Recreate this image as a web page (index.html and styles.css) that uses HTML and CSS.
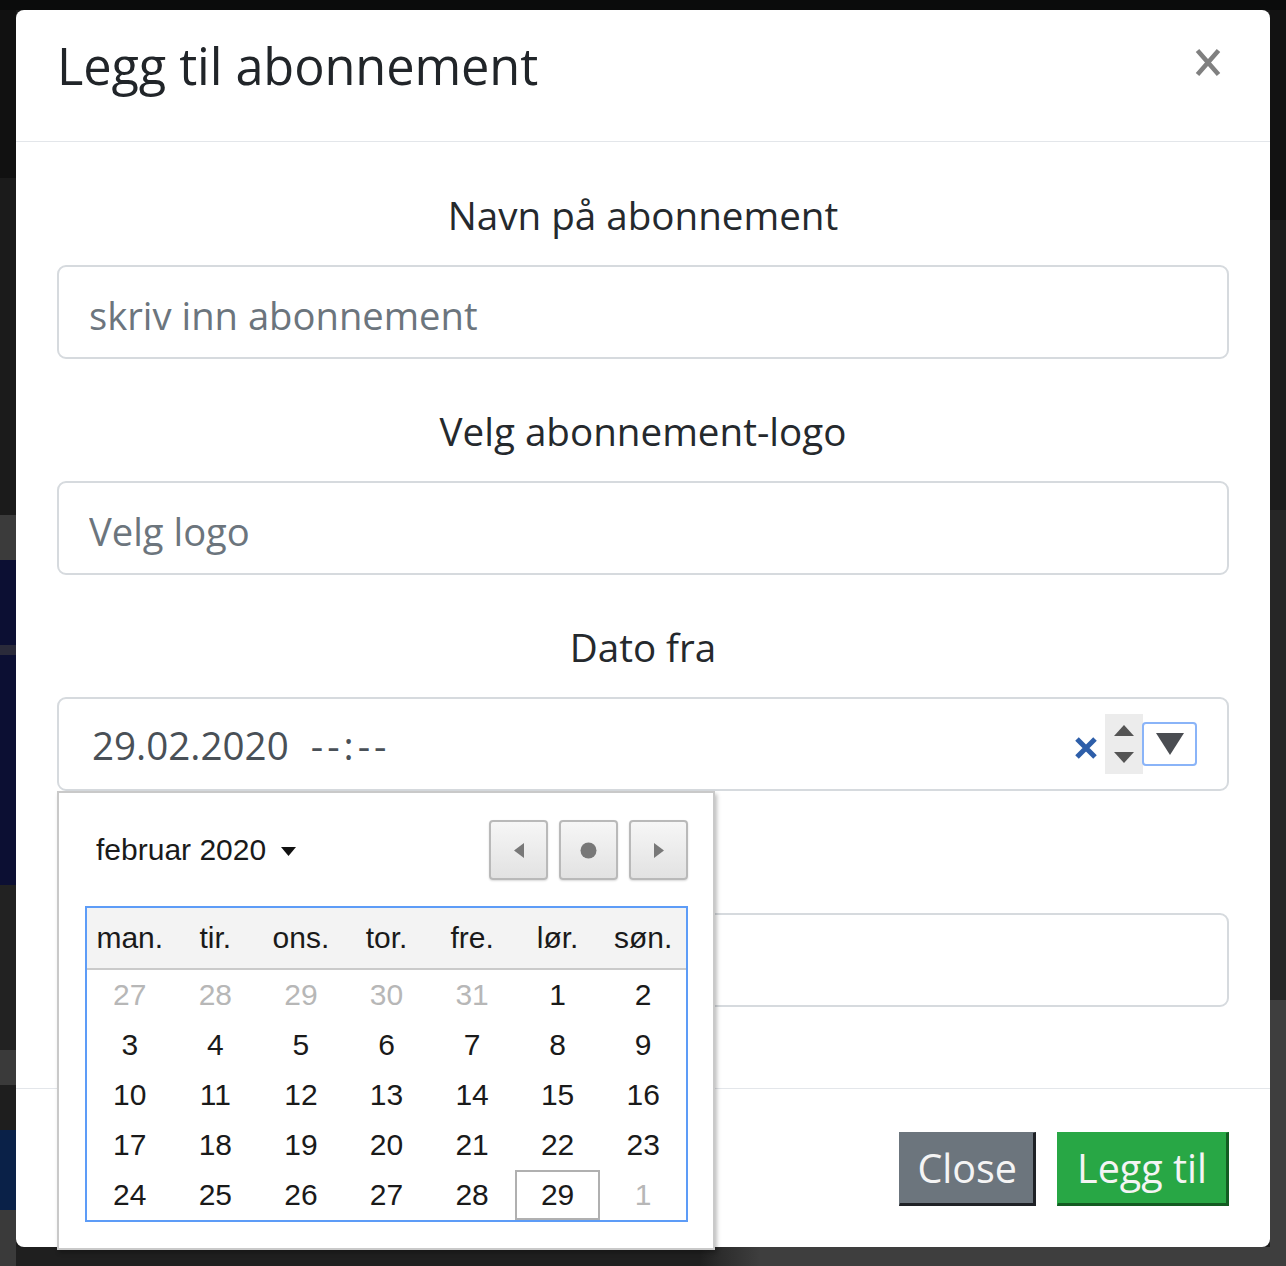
FILE: index.html
```html
<!DOCTYPE html>
<html lang="no">
<head>
<meta charset="utf-8">
<title>Legg til abonnement</title>
<link rel="stylesheet" href="styles.css">
</head>
<body>
<div class="modal">
  <div class="modal-header">
    <h5 class="modal-title">Legg til abonnement</h5>
    <button class="close" type="button" aria-label="Close">
      <svg width="26" height="31" viewBox="0 0 26 31"><path d="M2.5 3.5 L23.5 27.5 M23.5 3.5 L2.5 27.5" stroke="#808080" stroke-width="4.6" fill="none"/></svg>
    </button>
  </div>
  <div class="modal-body">
    <div class="form-group">
      <label class="label">Navn på abonnement</label>
      <input class="form-control" type="text" placeholder="skriv inn abonnement">
    </div>
    <div class="form-group">
      <label class="label">Velg abonnement-logo</label>
      <input class="form-control" type="text" placeholder="Velg logo">
    </div>
    <div class="form-group">
      <label class="label">Dato fra</label>
      <div class="date-wrap">
        <div class="form-control date-input">
          <span class="date-value">29.02.2020</span><span class="time-value">--:--</span>
          <span class="date-controls">
            <svg class="clear" width="26" height="26" viewBox="0 0 26 26"><path d="M4 4 L22 22 M22 4 L4 22" stroke="#2d5ea9" stroke-width="5" fill="none"/></svg>
            <span class="spin">
              <svg width="20" height="11" viewBox="0 0 20 11"><path d="M10 0 L20 11 L0 11 Z" fill="#545454"/></svg>
              <svg width="20" height="11" viewBox="0 0 20 11"><path d="M0 0 L20 0 L10 11 Z" fill="#545454"/></svg>
            </span>
            <span class="drop">
              <svg width="28" height="22" viewBox="0 0 28 22"><path d="M0 0 L28 0 L14 22 Z" fill="#4a4d52"/></svg>
            </span>
          </span>
        </div>
        <div class="picker">
          <div class="picker-head">
            <span class="month">februar 2020
              <svg class="caret" width="15" height="9" viewBox="0 0 15 9"><path d="M0 0 L15 0 L7.5 9 Z" fill="#111"/></svg>
            </span>
            <span class="nav">
              <span class="nav-btn"><svg width="10" height="15" viewBox="0 0 10 15"><path d="M10 0 L10 15 L0 7.5 Z" fill="#787878"/></svg></span>
              <span class="nav-btn"><svg width="17" height="17" viewBox="0 0 17 17"><circle cx="8.5" cy="8.5" r="8" fill="#787878"/></svg></span>
              <span class="nav-btn"><svg width="10" height="15" viewBox="0 0 10 15"><path d="M0 0 L10 7.5 L0 15 Z" fill="#787878"/></svg></span>
            </span>
          </div>
          <div class="cal">
            <div class="cal-head">
              <span>man.</span><span>tir.</span><span>ons.</span><span>tor.</span><span>fre.</span><span>lør.</span><span>søn.</span>
            </div>
            <div class="cal-body">
              <span class="muted">27</span><span class="muted">28</span><span class="muted">29</span><span class="muted">30</span><span class="muted">31</span><span>1</span><span>2</span>
              <span>3</span><span>4</span><span>5</span><span>6</span><span>7</span><span>8</span><span>9</span>
              <span>10</span><span>11</span><span>12</span><span>13</span><span>14</span><span>15</span><span>16</span>
              <span>17</span><span>18</span><span>19</span><span>20</span><span>21</span><span>22</span><span>23</span>
              <span>24</span><span>25</span><span>26</span><span>27</span><span>28</span><span class="selected">29</span><span class="muted">1</span>
            </div>
          </div>
        </div>
      </div>
    </div>
    <div class="form-group">
      <label class="label">Dato til</label>
      <input class="form-control" type="text">
    </div>
  </div>
  <div class="modal-footer">
    <button class="btn btn-secondary" type="button">Close</button>
    <button class="btn btn-success" type="button">Legg til</button>
  </div>
</div>
</body>
</html>
```

FILE: styles.css
```css
html, body {
  margin: 0;
  padding: 0;
  height: 1266px;
  overflow: hidden;
}

body {
  padding: 10px 16px 0 16px;
  box-sizing: border-box;
  font-family: "Open Sans", "Noto Sans", sans-serif;
  background:
    linear-gradient(#0b0c0c, #0b0c0c) left top / 100% 10px no-repeat,
    linear-gradient(to bottom, #111 0 178px, #1b1b1b 178px 515px, #3b3b3b 515px 560px, #0c0f33 560px 645px, #2a2a3a 645px 655px, #0c0f33 655px 885px, #222 885px 1050px, #3a3a3a 1050px 1085px, #1e1e1e 1085px 1130px, #0a2148 1130px 1210px, #3a3a3a 1210px) left top / 16px 100% no-repeat,
    linear-gradient(to bottom, #121212 0 220px, #1c1c1c 220px 510px, #262626 510px 1000px, #3e3e3e 1000px) right top / 16px 100% no-repeat,
    linear-gradient(to right, #1f1f1f 0 700px, #2c2c2c 720px, #3e3e3e 760px) left bottom / 100% 19px no-repeat,
    #1c1c1c;
}

.modal {
  background: #fff;
  border-radius: 8px;
  width: 1254px;
}

.modal-header {
  display: flex;
  align-items: flex-start;
  padding: 19px 41px 38px 41px;
  border-bottom: 1px solid #e3e6ea;
}

.modal-title {
  margin: 0;
  font-size: 50.5px;
  line-height: 74px;
  font-weight: 400;
  color: #212529;
  letter-spacing: -0.1px;
}

.close {
  margin-left: auto;
  margin-top: 18px;
  padding: 0 8px 0 0;
  border: 0;
  background: transparent;
  line-height: 0;
}

.modal-body {
  padding: 45px 41px 37px 41px;
}

.form-group {
  margin-bottom: 44px;
}

.label {
  display: block;
  text-align: center;
  font-size: 38.6px;
  line-height: 56px;
  margin-bottom: 22px;
  color: #25292d;
}

.form-control {
  display: block;
  width: 100%;
  box-sizing: border-box;
  height: 94px;
  padding: 5px 30px 0 30px;
  border: 2px solid #d6dade;
  border-radius: 9px;
  font-family: "Open Sans", "Noto Sans", sans-serif;
  font-size: 38.2px;
  color: #495057;
  background: #fff;
  outline: none;
}

.form-control::placeholder {
  color: #6c757d;
  opacity: 1;
}

.date-wrap {
  position: relative;
}

.date-input {
  display: flex;
  align-items: center;
  padding: 0 30px 0 33px;
  font-size: 38.6px;
}

.date-value {
  color: #495057;
  margin-top: 2px;
}

.time-value {
  color: #495057;
  margin-left: 22px;
  letter-spacing: 4px;
  margin-top: 2px;
}

.date-controls {
  margin-left: auto;
  display: flex;
  align-items: center;
}

.clear {
  margin-top: 8px;
  margin-right: 6px;
}

.spin {
  width: 38px;
  height: 60px;
  background: #ececec;
  display: flex;
  flex-direction: column;
  align-items: center;
  justify-content: center;
  gap: 16px;
}

.drop {
  width: 55px;
  height: 44px;
  box-sizing: border-box;
  border: 2px solid #8ab4f8;
  border-radius: 4px;
  display: flex;
  align-items: center;
  justify-content: center;
  margin-left: -1px;
}

.picker {
  position: absolute;
  top: 100%;
  left: 0;
  width: 658px;
  height: 459px;
  box-sizing: border-box;
  background: #fff;
  border: 2px solid #c9c9c9;
  box-shadow: 2px 3px 4px rgba(0, 0, 0, 0.25);
  padding: 27px 25px 0 26px;
  font-family: "Liberation Sans", Arial, sans-serif;
  z-index: 2;
}

.picker-head {
  display: flex;
  align-items: center;
  justify-content: space-between;
  height: 60px;
}

.month {
  font-size: 30px;
  color: #1a1a1a;
  padding-left: 11px;
  display: flex;
  align-items: center;
}

.caret {
  margin-left: 15px;
  margin-top: 2px;
}

.nav {
  display: flex;
  gap: 11px;
}

.nav-btn {
  width: 59px;
  height: 60px;
  box-sizing: border-box;
  border: 2px solid #b9b9b9;
  border-radius: 4px;
  background: linear-gradient(#f6f6f6, #e2e2e2);
  box-shadow: 0 1px 2px rgba(0, 0, 0, 0.15);
  display: flex;
  align-items: center;
  justify-content: center;
}

.cal {
  margin-top: 26px;
  border: 2px solid #5d9cf7;
  width: 603px;
  box-sizing: border-box;
}

.cal-head,
.cal-body {
  display: grid;
  grid-template-columns: repeat(7, 1fr);
}

.cal-head {
  background: #f3f3f3;
  border-bottom: 2px solid #cacaca;
  height: 62px;
  box-sizing: border-box;
}

.cal-head span,
.cal-body span {
  display: flex;
  align-items: center;
  justify-content: center;
  font-size: 30px;
  color: #1a1a1a;
}

.cal-body {
  grid-auto-rows: 50px;
}

.cal-body .muted {
  color: #b7b7b7;
}

.cal-body .selected {
  border: 2px solid #b0b0b0;
  box-sizing: border-box;
}

.modal-footer {
  border-top: 1px solid #e3e6ea;
  display: flex;
  justify-content: flex-end;
  gap: 21px;
  padding: 43px 41px 41px 41px;
}

.btn {
  font-family: "Open Sans", "Noto Sans", sans-serif;
  font-size: 39.5px;
  line-height: 56px;
  padding: 7px 19px 7px 19px;
  color: #f4f4f4;
  border: 1px solid transparent;
  border-right-width: 3px;
  border-bottom-width: 3px;
  border-radius: 0;
}

.btn-secondary {
  background: #6c757d;
  border-color: #6c757d #1f2226 #1f2226 #6c757d;
  padding-left: 17px;
  padding-right: 16px;
}

.btn-success {
  background: #28a745;
  border-color: #28a745 #135c22 #135c22 #28a745;
}
```
